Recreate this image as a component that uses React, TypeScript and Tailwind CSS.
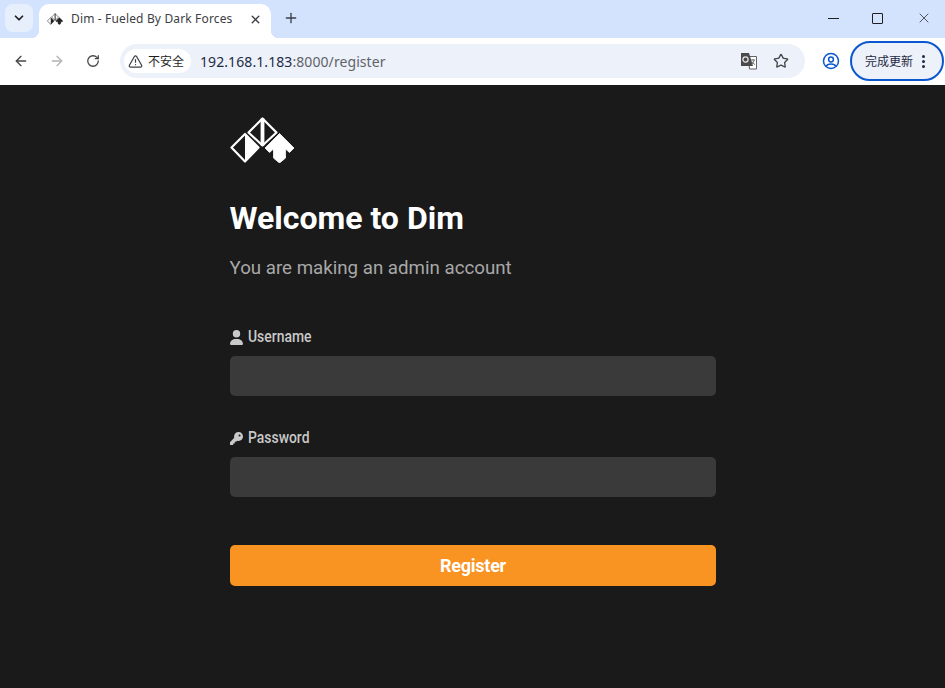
import { ArrowLeft, ArrowRight, ChevronDown, Plus, RotateCw, Star, TriangleAlert, X } from "lucide-react";

function DimLogo({ className, color = "#fff" }: { className?: string; color?: string }) {
  return (
    <svg viewBox="0 0 64 46" className={className}>
      {/* top diamond */}
      <path d="M32.5 1.5 L46.5 15.5 L32.5 28.5 L18.5 15.5 Z" fill="none" stroke={color} strokeWidth="2.2" strokeLinejoin="round" />
      <rect x="30.6" y="1.5" width="3.8" height="27" fill={color} />
      {/* left diamond */}
      <path d="M15 17 L1.5 30.5 L15 44.5 L28.5 30.5 Z" fill={color === "#fff" ? "#1a1a1a" : "#fff"} stroke={color} strokeWidth="2.2" strokeLinejoin="round" />
      <path d="M15 17 L28.5 30.5 L15 44.5 Z" fill={color} />
      {/* right diamond, arrow cut out of the lower edges */}
      <path d="M49.5 16.5 L64 31 L59.5 35.5 L55.5 32 L55.5 41 L49.5 46 L43.5 41 L43.5 32 L39.5 35.5 L35 31 Z" fill={color} stroke={color} strokeWidth="0.8" strokeLinejoin="round" />
    </svg>
  );
}

function TranslateIcon() {
  return (
    <svg viewBox="0 0 18 18" className="h-[18px] w-[18px]">
      <path d="M8.5 4.5 H16.5 V17 H9.5 Z" fill="#fff" stroke="#5f6368" strokeWidth="1" />
      <path d="M1 1 H9 L13 14 H1 Z" fill="#4a4a4d" />
      <circle cx="5.5" cy="7.5" r="2.6" fill="none" stroke="#e8e8e8" strokeWidth="1.2" />
      <path d="M11 8 H15 M13 7 V8 M14.3 8 Q13.4 11 11.4 12.6 M12 9.6 Q13 11.6 15 12.6" fill="none" stroke="#5f6368" strokeWidth="0.9" />
    </svg>
  );
}

function UserIcon() {
  return (
    <svg viewBox="0 0 448 512" className="h-[15px] w-[13px]" fill="#c9c9c9">
      <path d="M224 256A128 128 0 1 0 224 0a128 128 0 1 0 0 256zm-45.7 48C79.8 304 0 383.8 0 482.3C0 498.7 13.3 512 29.7 512H418.3c16.4 0 29.7-13.3 29.7-29.7C448 383.8 368.2 304 269.7 304H178.3z" />
    </svg>
  );
}

function KeyIcon() {
  return (
    <svg viewBox="0 0 512 512" className="h-[13px] w-[13px]" fill="#c9c9c9">
      <path d="M336 352c97.2 0 176-78.8 176-176S433.2 0 336 0S160 78.8 160 176c0 18.7 2.9 36.8 8.3 53.7L7 391c-4.5 4.5-7 10.6-7 17v80c0 13.3 10.7 24 24 24h80c13.3 0 24-10.7 24-24V448h40c13.3 0 24-10.7 24-24V384h40c6.4 0 12.5-2.5 17-7l33.3-33.3c16.9 5.4 35 8.3 53.7 8.3zM376 96a40 40 0 1 1 0 80 40 40 0 1 1 0-80z" />
    </svg>
  );
}

function Field({ icon, label }: { icon: React.ReactNode; label: string }) {
  return (
    <div className="flex flex-col">
      <label className="flex h-[24px] items-center gap-[5px] text-[#c9c9c9]">
        {icon}
        <span className="origin-left scale-x-[0.87] font-['Roboto',sans-serif] text-[16px] font-medium">{label}</span>
      </label>
      <input className="mt-[7px] h-10 w-full rounded-[5px] bg-[#3a3a3a] outline-none" />
    </div>
  );
}

export default function App() {
  return (
    <div className="flex h-[688px] w-[945px] flex-col overflow-hidden bg-[#1a1a1a] font-['Roboto',sans-serif]">
      {/* Tab strip */}
      <div className="flex h-[38px] shrink-0 items-start bg-[#d3e3fd] pt-1 pl-[5px]">
        <button className="flex h-7 w-7 items-center justify-center rounded-lg bg-[#e7effd] text-[#1f1f1f]">
          <ChevronDown size={14} strokeWidth={3} />
        </button>
        <div className="relative ml-1.5 flex h-[34px] w-[232px] items-center rounded-t-[10px] bg-white pb-1 pl-2 pr-2">
          <span className="absolute -left-2 bottom-0 h-2 w-2 bg-[radial-gradient(circle_at_0_0,#d3e3fd_8px,#fff_8.5px)]" />
          <span className="absolute -right-2 bottom-0 h-2 w-2 bg-[radial-gradient(circle_at_100%_0,#d3e3fd_8px,#fff_8.5px)]" />
          <DimLogo color="#222" className="h-3 w-4" />
          <span className="ml-2 font-['Noto_Sans',sans-serif] text-[12px] tracking-[0.15px] text-[#3c4043]">Dim - Fueled By Dark Forces</span>
          <X size={13} strokeWidth={2.6} className="ml-auto mr-[1px] text-[#3c4043]" />
        </div>
        <Plus size={16} strokeWidth={2} className="ml-[12px] mt-[6px] text-[#3c4043]" />
        <div className="ml-auto mt-[6px] flex items-center">
          <span className="mr-[33px] h-px w-[11px] bg-[#1f1f1f]" />
          <span className="mr-[33px] h-[11px] w-[11px] rounded-[1px] border border-[#1f1f1f]" />
          <X size={16} strokeWidth={1.1} className="mr-[13px] text-[#1f1f1f]" />
        </div>
      </div>

      {/* Toolbar */}
      <div className="flex h-[47px] shrink-0 items-center bg-white pb-[1px] pl-[13px] pr-[1px]">
        <ArrowLeft size={16} strokeWidth={2} className="text-[#444746]" />
        <ArrowRight size={16} strokeWidth={2} className="ml-5 text-[#b1b3b5]" />
        <RotateCw size={14} strokeWidth={2.2} className="ml-[21px] text-[#444746]" />
        <div className="ml-[20px] flex h-[34px] w-[685px] items-center rounded-full bg-[#ecf1fa] pl-1 pr-4">
          <div className="flex h-[24px] items-center gap-[5px] rounded-full bg-white pl-[4px] pr-[7px]">
            <TriangleAlert size={15} strokeWidth={2} className="text-[#3c4043]" />
            <span className="font-['Noto_Sans_CJK_SC',sans-serif] text-[12px] text-[#1f1f1f]">不安全</span>
          </div>
          <span className="ml-[9px] font-['Noto_Sans',sans-serif] text-[14px] tracking-[0.08px] text-[#1f2a44]">
            192.168.1.183<span className="text-[#5f6368]">:8000/register</span>
          </span>
          <div className="ml-auto flex items-center gap-[15px]">
            <TranslateIcon />
            <Star size={16} strokeWidth={2} className="text-[#444746]" />
          </div>
        </div>
        <svg viewBox="0 0 24 24" className="ml-[17px] h-[18px] w-[18px]" fill="none" stroke="#0b57d0" strokeWidth="2">
          <circle cx="12" cy="12" r="10" />
          <circle cx="12" cy="10" r="3.2" />
          <path d="M5.5 19 C7.5 15 16.5 15 18.5 19" />
        </svg>
        <button className="ml-[10px] flex h-[40px] w-[94px] items-center rounded-full border-2 border-[#0b57d0] bg-[#ecf1fa] pl-[13px]">
          <span className="font-['Noto_Sans_CJK_SC',sans-serif] text-[12px] text-[#1f2a44]">完成更新</span>
          <span className="ml-[9px] flex flex-col gap-[2px]">
            <span className="h-[3px] w-[3px] rounded-full bg-[#1f2a44]" />
            <span className="h-[3px] w-[3px] rounded-full bg-[#1f2a44]" />
            <span className="h-[3px] w-[3px] rounded-full bg-[#1f2a44]" />
          </span>
        </button>
      </div>

      {/* Page */}
      <main className="mx-auto flex w-[486px] flex-col pt-8">
        <DimLogo className="h-[46px] w-16" />
        <h1 className="mt-[36px] text-[32px] leading-[38px] font-bold text-white">Welcome to Dim</h1>
        <p className="mt-[20px] text-[18.72px] leading-[22px] text-[#a8a8a8]">You are making an admin account</p>
        <div className="mt-[46px] flex flex-col gap-[30px]">
          <Field icon={<UserIcon />} label="Username" />
          <Field icon={<KeyIcon />} label="Password" />
        </div>
        <button className="mt-12 h-[41px] rounded-[5px] bg-[#f99321] pl-[1px] text-[18px] font-bold tracking-[-0.25px] text-white">Register</button>
      </main>
    </div>
  );
}
